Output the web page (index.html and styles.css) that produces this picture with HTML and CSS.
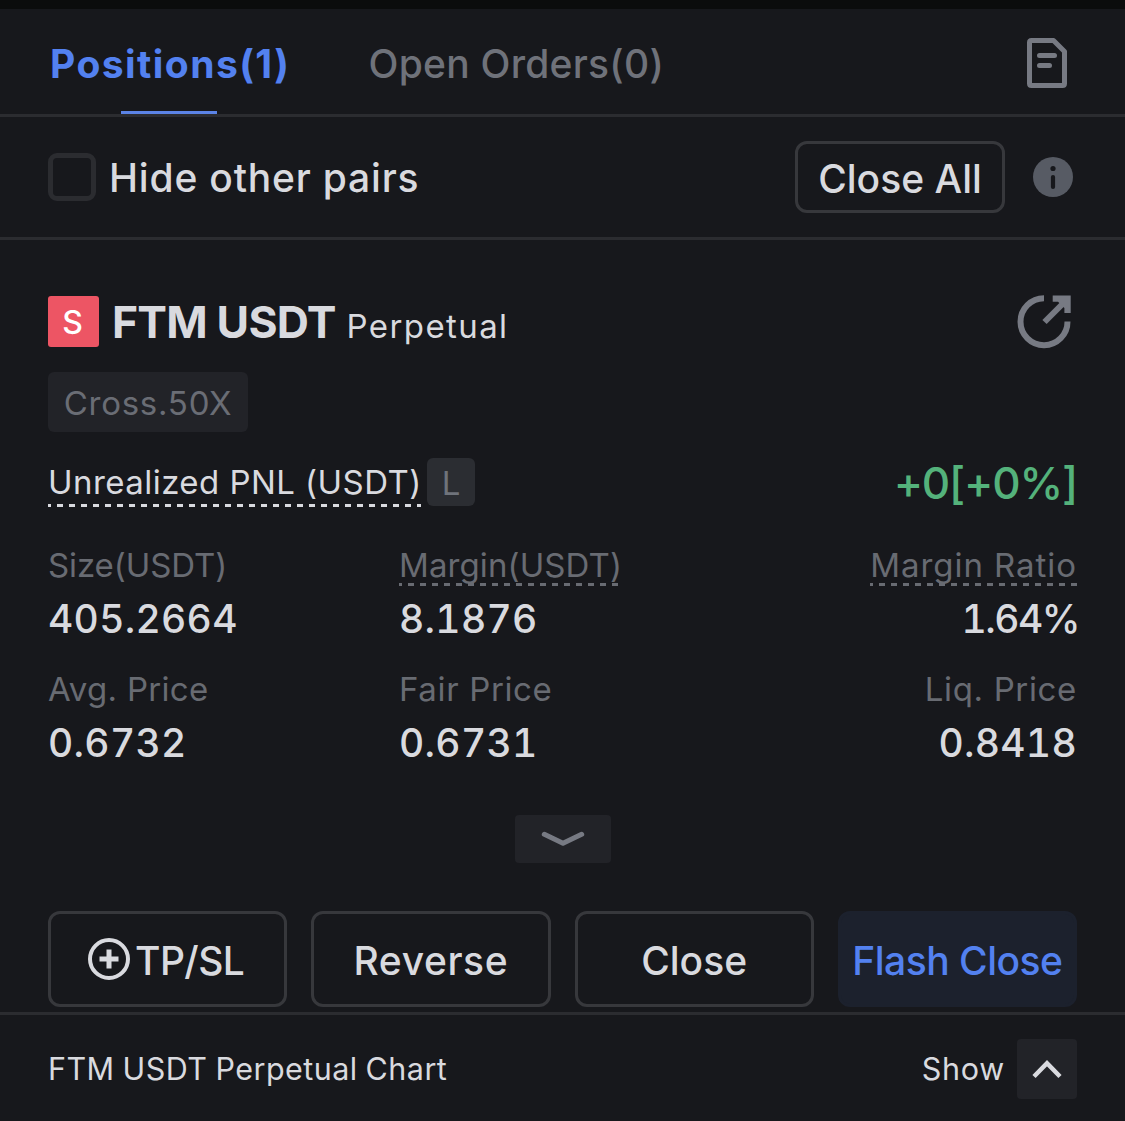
FILE: index.html
```html
<!DOCTYPE html>
<html lang="en">
<head>
  <meta charset="UTF-8">
  <title>Positions</title>
  <meta name="viewport" content="width=device-width, initial-scale=1.0">
  <link rel="stylesheet" href="styles.css">
</head>
<body>
  <header class="tabs">
    <a class="tab active">Positions(1)</a>
    <a class="tab">Open Orders(0)</a>
    <svg class="icon-doc" width="60" height="60" viewBox="0 0 60 60" fill="none" stroke="#777a83" stroke-width="5" stroke-linejoin="round" stroke-linecap="round">
      <path d="M14.5 7.5H36.5L47.5 18.5V50.5Q47.5 52.5 45.5 52.5H14.5Q12.5 52.5 12.5 50.5V9.5Q12.5 7.5 14.5 7.5Z"/>
      <path d="M22.5 22.5H37.5M22.5 32.5H32.5"/>
    </svg>
  </header>

  <div class="filter">
    <span class="checkbox"></span>
    <span class="filter-label">Hide other pairs</span>
    <button class="btn close-all">Close All</button>
    <svg width="48" height="48" viewBox="0 0 48 48">
      <circle cx="24" cy="24" r="20" fill="#575b64"/>
      <circle cx="24" cy="15.5" r="2.6" fill="#17181c"/>
      <path d="M24 24V34" stroke="#17181c" stroke-width="4.2" stroke-linecap="round"/>
    </svg>
  </div>

  <main class="position">
    <div class="title">
      <span class="side">S</span>
      <div class="names">
        <h1 class="pair">FTM USDT</h1>
        <span class="type">Perpetual</span>
      </div>
      <svg class="icon-share" width="60" height="60" viewBox="0 0 60 60" fill="none" stroke="#777a83" stroke-width="6">
        <path d="M27 6.2A23.5 23.5 0 1 0 50.5 29.5"/>
        <path d="M27.5 30L50 7.5"/>
        <path d="M35.7 3.4H53.7V21H47.4V16L41 9.7H35.7Z" fill="#777a83" stroke="none"/>
      </svg>
    </div>

    <div class="leverage">Cross.50X</div>

    <div class="pnl">
      <span class="pnl-label dashed">Unrealized PNL (USDT)</span>
      <span class="pnl-tag">L</span>
      <span class="pnl-value">+0[+0%]</span>
    </div>

    <div class="stats">
      <div class="stat">
        <span class="label tight">Size(USDT)</span>
        <span class="value">405.2664</span>
      </div>
      <div class="stat">
        <span class="label margin dashed">Margin(USDT)</span>
        <span class="value">8.1876</span>
      </div>
      <div class="stat right">
        <span class="label wide dashed">Margin Ratio</span>
        <span class="value percent">1.64%</span>
      </div>
      <div class="stat">
        <span class="label avg">Avg. Price</span>
        <span class="value">0.6732</span>
      </div>
      <div class="stat">
        <span class="label">Fair Price</span>
        <span class="value">0.6731</span>
      </div>
      <div class="stat right">
        <span class="label">Liq. Price</span>
        <span class="value">0.8418</span>
      </div>
    </div>

    <div class="expand">
      <svg width="96" height="48" viewBox="0 0 96 48" fill="none" stroke="#777a83" stroke-width="5" stroke-linecap="round" stroke-linejoin="round">
        <path d="M29.3 19.3L48 28.3L66.7 19.3"/>
      </svg>
    </div>

    <div class="actions">
      <button class="btn tpsl">
        <svg width="42" height="42" viewBox="0 0 42 42" fill="none" stroke="#d9dadf" stroke-width="4">
          <circle cx="21" cy="21" r="19"/>
          <path d="M21 11.5V30.5M11.5 21H30.5" stroke-width="5"/>
        </svg>
        TP/SL
      </button>
      <button class="btn reverse">Reverse</button>
      <button class="btn">Close</button>
      <button class="btn flash">Flash Close</button>
    </div>
  </main>

  <footer class="chart-bar">
    <span class="chart-name">FTM USDT Perpetual Chart</span>
    <span class="show">Show</span>
    <svg class="toggle" width="60" height="60" viewBox="0 0 60 60" fill="none" stroke="#d9dadf" stroke-width="4.5">
      <path d="M17 37.5L30 24.2L43 37.5"/>
    </svg>
  </footer>
</body>
</html>
```
FILE: styles.css
```css
* {
  box-sizing: border-box;
}
body {
  margin: 0;
  background: #17181c;
  border-top: 9px solid #0b0c0c;
  color: #d9dadf;
  font-family: Inter, "Liberation Sans", sans-serif;
  font-size: 39px;
  white-space: nowrap;
}
svg {
  display: block;
  flex: none;
}

/* tabs */
.tabs {
  display: flex;
  height: 108px;
  padding: 0 48px;
  border-bottom: 3px solid #2b2c30;
}
.tab {
  position: relative;
  margin-right: 78px;
  padding-top: 5px;
  line-height: 100px;
  font-weight: 500;
  letter-spacing: 0.25px;
  color: #6f727a;
}
.tab.active {
  padding-left: 2px;
  font-weight: 700;
  letter-spacing: 1.45px;
  color: #5381f0;
}
.tab.active::after {
  content: "";
  position: absolute;
  left: 50%;
  bottom: 0;
  width: 96px;
  height: 3px;
  margin-left: -48px;
  background: #5b83e6;
}
.icon-doc {
  margin: 24px 0 0 auto;
}

/* filter row */
.filter {
  display: flex;
  align-items: center;
  height: 123px;
  padding: 0 48px;
  border-bottom: 3px solid #2b2c30;
}
.checkbox {
  width: 48px;
  height: 48px;
  border: 5px solid #2b2c30;
  border-radius: 9px;
}
.filter-label {
  margin-left: 13px;
  padding-top: 1px;
  font-weight: 500;
  letter-spacing: 0.8px;
}
.btn {
  display: flex;
  align-items: center;
  justify-content: center;
  height: 96px;
  padding: 2px 0 0;
  background: none;
  border: 3px solid #37383c;
  border-radius: 12px;
  color: inherit;
  font: inherit;
  font-weight: 500;
  letter-spacing: 0;
}
.close-all {
  width: 210px;
  height: 72px;
  margin: 0 24px 0 auto;
}

/* position card */
.position {
  padding: 56px 48px 5px;
}
.title {
  display: flex;
  align-items: center;
  height: 51px;
}
.side {
  width: 51px;
  height: 51px;
  padding-right: 2px;
  border-radius: 3px;
  background: #ed5564;
  color: #fff;
  font-size: 32px;
  font-weight: 500;
  line-height: 53px;
  text-align: center;
}
.names {
  display: flex;
  align-items: baseline;
  margin-left: 13px;
  padding-top: 1px;
}
.pair {
  margin: 0;
  font-size: 44.5px;
  line-height: 50px;
  letter-spacing: -0.8px;
}
.type {
  margin-left: 11px;
  font-size: 33px;
  letter-spacing: 1.4px;
}
.icon-share {
  margin-left: auto;
}
.leverage {
  width: 200px;
  height: 60px;
  margin-top: 25px;
  padding-top: 1px;
  border-radius: 6px;
  background: #222328;
  color: #6a6d75;
  font-size: 33px;
  line-height: 60px;
  letter-spacing: 0.75px;
  text-align: center;
}
.pnl {
  display: flex;
  height: 49px;
  margin-top: 26px;
}
.pnl-label {
  width: 373px;
  font-size: 33px;
  line-height: 48px;
  letter-spacing: 0.45px;
}
.pnl-tag {
  width: 48px;
  height: 48px;
  margin-left: 6px;
  border-radius: 6px;
  background: #2b2d32;
  color: #6f737b;
  font-size: 33px;
  line-height: 50px;
  text-align: center;
}
.pnl-value {
  margin-left: auto;
  color: #54b27b;
  font-size: 44px;
  font-weight: 500;
  line-height: 50px;
  letter-spacing: -1.2px;
}

/* dashed underline, 6px on and 6px off */
.dashed {
  background: repeating-linear-gradient(90deg, currentColor 0 3px, transparent 3px 9px, currentColor 9px 12px) left bottom / 100% 3px no-repeat;
}

.stats {
  display: grid;
  grid-template-columns: 351px 1fr auto;
  row-gap: 30px;
  margin-top: 38px;
}
.stat {
  display: flex;
  flex-direction: column;
  align-items: flex-start;
}
.stat.right {
  align-items: flex-end;
}
.label {
  height: 41px;
  color: #686b72;
  font-size: 33px;
  line-height: 40px;
  letter-spacing: 0.65px;
}
.label.tight {
  letter-spacing: -0.1px;
}
.label.margin {
  letter-spacing: 0.1px;
}
.label.avg {
  letter-spacing: 0.3px;
}
.label.wide {
  letter-spacing: 0.95px;
}
.value {
  margin-top: 13px;
  font-weight: 500;
  font-variant-numeric: tabular-nums;
  line-height: 40px;
  letter-spacing: 0.3px;
}
.value.percent {
  margin-right: -2px;
  letter-spacing: -1.5px;
}
.expand {
  width: 96px;
  height: 48px;
  margin: 52px auto 0;
  border-radius: 4px;
  background: #222328;
}
.actions {
  display: grid;
  grid-template-columns: repeat(4, 1fr);
  gap: 24px;
  margin-top: 48px;
}
.tpsl {
  gap: 5px;
  padding-right: 3px;
  letter-spacing: -0.6px;
}
.tpsl svg {
  margin-top: -2px;
}
.reverse {
  letter-spacing: 0.6px;
}
.flash {
  border-color: #1c212d;
  background: #1c212d;
  color: #5381f0;
  letter-spacing: -0.5px;
}

/* chart bar */
.chart-bar {
  display: flex;
  align-items: center;
  height: 109px;
  padding: 2px 48px 0;
  border-top: 3px solid #2b2c30;
  font-size: 30.5px;
}
.chart-name {
  margin-top: -2px;
  letter-spacing: 0.45px;
  word-spacing: -1px;
}
.show {
  margin: -2px 0 0 auto;
  letter-spacing: 0.72px;
}
.toggle {
  margin-left: 12px;
  border-radius: 4px;
  background: #222328;
}
```
